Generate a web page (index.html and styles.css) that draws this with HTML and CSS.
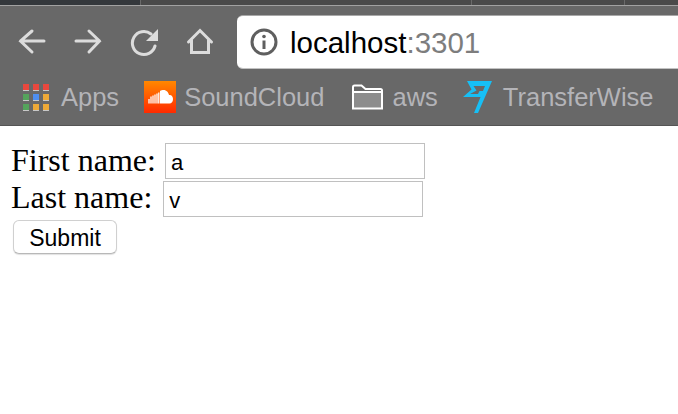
FILE: index.html
```html
<!DOCTYPE html>
<html lang="en">
<head>
<meta charset="utf-8">
<title>localhost:3301</title>
<link rel="stylesheet" href="styles.css">
</head>
<body>
<header class="chrome">
  <div class="tabstrip">
    <div class="tab active"></div>
    <div class="tab wide"></div>
    <div class="tab mid"></div>
    <div class="tab rest"></div>
  </div>
  <div class="toolbar">
    <nav class="nav">
      <svg class="nav-icon" viewBox="0 0 32 32"><path d="M29 16H5.500M17 6 5.500 16 17 27"/></svg>
      <svg class="nav-icon" viewBox="0 0 32 32"><path d="M5 16H28.500M18 6 28.500 16 18 27"/></svg>
      <svg class="nav-icon" viewBox="0 0 32 32"><path d="M28 21A11.500 11.500 0 1 1 24 9"/><path class="fill" d="M31 4V16H19Z"/></svg>
      <svg class="nav-icon" viewBox="0 0 32 32"><path d="M5.500 17 17 5.500 28.500 17M8.500 15V27.500H25.500V15"/></svg>
    </nav>
    <div class="omnibox">
      <svg class="info" viewBox="0 0 28 28"><circle cx="14" cy="14" r="12"/><path d="M14 12.500V21"/><circle class="dot" cx="14" cy="8.500" r="1.800"/></svg>
      <span class="url">localhost<span class="port">:3301</span></span>
    </div>
  </div>
  <div class="bookmarks">
    <a class="bookmark apps">
      <span class="grid">
        <i class="red"></i><i class="red"></i><i class="red"></i>
        <i class="green"></i><i class="blue"></i><i class="yellow"></i>
        <i class="green"></i><i class="yellow"></i><i class="yellow"></i>
      </span>
      Apps
    </a>
    <a class="bookmark sc">
      <svg class="soundcloud" viewBox="0 0 32 32">
        <defs><linearGradient id="sc" x1="0" y1="0" x2="0" y2="1"><stop offset="0" stop-color="#ff8800"/><stop offset="1" stop-color="#ff2a00"/></linearGradient></defs>
        <rect width="32" height="32" fill="url(#sc)"/>
        <path class="bars" d="M5 22.500V18M7 22.500V15.500M9 22.500V14.500M11 22.500V13.500M13 22.500V12.500M14.800 22.500V11.500"/>
        <path class="cloud" d="M16 22.500V10C17 9.300 18.500 9 19.500 9 22.500 9 24.500 11.500 25 14 27.500 13.500 29 15.500 29 18 29 20.800 27.500 22.500 25.500 22.500Z"/>
      </svg>
      SoundCloud
    </a>
    <a class="bookmark folder">
      <svg class="folder-icon" viewBox="0 0 32 26"><path class="folder-fill" d="M1.500 8H30.500V24.500H1.500Z"/><path class="folder-line" d="M1.500 24.500V3Q1.500 1.500 3 1.500H10L14 5H29Q30.500 5 30.500 6.500V24.500ZM1.500 8H30.500"/></svg>
      aws
    </a>
    <a class="bookmark tw">
      <svg class="wise" viewBox="0 0 29 32"><path d="M4 0H29L15 32H11L22 5H10.500L13.500 9.500 7 13H15L16.500 10H20L17.500 16H0L8.500 8.500Z"/></svg>
      TransferWise
    </a>
  </div>
</header>
<main class="page">
  <form>
    <div class="line first"><span class="label">First name: </span><input class="field" type="text" value="a"></div>
    <div class="line last"><span class="label">Last name: </span><input class="field" type="text" value="v"></div>
    <button class="submit" type="button">Submit</button>
  </form>
</main>
</body>
</html>
```
FILE: styles.css
```css
* { box-sizing: border-box; }
html, body { margin: 0; padding: 0; height: 100%; background: #fff; overflow: hidden; }
body { font-family: "Liberation Serif", serif; color: #000; }

.chrome { height: 126px; background: #686868; border-bottom: 1px solid #555; display: flex; flex-direction: column; }
.tabstrip { height: 6px; flex: none; display: flex; background: #4a4a4a; border-bottom: 1px solid #a2a2a2; }
.tab { border-right: 1px solid #6a6a6a; }
.active { width: 141px; background: #34383c; }
.wide { width: 331px; }
.mid { width: 153px; }
.rest { flex: 1; border-right: 0; }

.toolbar { height: 54px; flex: none; margin-top: 9px; display: flex; align-items: flex-start; }
.nav { display: flex; gap: 24px; width: 237px; padding: 10px 0 0 15px; }
.nav-icon { width: 32px; height: 32px; flex: none; fill: none; stroke: #dcdcdc; stroke-width: 3; stroke-linecap: round; stroke-linejoin: miter; }
.nav-icon .fill { fill: #dcdcdc; stroke: none; }

.omnibox { flex: 1; height: 54px; background: #fff; border-radius: 6px 0 0 6px; border-top: 1px solid #a8a8a8; border-bottom: 1px solid #c2c2c2; display: flex; align-items: center; padding-left: 13px; gap: 12px; }
.info { width: 28px; height: 28px; fill: none; stroke: #5f5f5f; stroke-width: 3; }
.info .dot { fill: #5f5f5f; stroke: none; }
.url { font: 29.500px "Liberation Sans", Arial, sans-serif; color: #000; padding-top: 2px; }
.port { color: #7d7d7d; }

.bookmarks { display: flex; align-items: center; flex: 1; padding-left: 23px; font: 25.500px "Liberation Sans", Arial, sans-serif; color: #b4b4b8; }
.bookmark { display: flex; align-items: center; white-space: nowrap; }
.grid { display: grid; grid-template-columns: repeat(3, 6px); grid-auto-rows: 7px; gap: 3px 4px; width: 26px; margin-right: 12px; }
.grid i { display: block; border-bottom: 1px solid #c8c8c8; }
.red { background: #e8483e; }
.green { background: #55a35c; }
.blue { background: #4e8ff0; }
.yellow { background: #eeaa38; }

.sc { margin-left: 25px; }
.soundcloud { width: 32px; height: 32px; margin-right: 8px; }
.bars { stroke: #fff; stroke-width: 1.300; fill: none; }
.cloud { fill: #fff; }

.folder { margin-left: 26px; }
.folder-icon { width: 33px; height: 26px; margin-right: 9px; }
.folder-fill { fill: #8d8d8d; }
.folder-line { fill: none; stroke: #fff; stroke-width: 2; }

.tw { margin-left: 25px; }
.wise { width: 29px; height: 32px; margin-right: 11px; fill: #17bff5; }

.page { padding: 16px 0 0 11px; font-size: 32px; line-height: 38px; }
.line { height: 38px; display: flex; align-items: center; white-space: pre; }
.first .label { margin-bottom: 2px; }
.last .label { margin-bottom: 4px; }
.field { width: 260px; height: 36px; padding: 3px 5px 0; border: 1px solid #c0c0c0; background: #fff; font: 22px "Liberation Sans", Arial, sans-serif; color: #000; outline: none; }
.first .field { margin-left: 1px; }
.last .field { margin-left: 3px; }
.submit { display: block; width: 104px; height: 34px; margin: 2px 0 0 2px; padding: 3px 0 0; border: 1px solid #d0d0d0; border-bottom-color: #b8b8b8; border-radius: 6px; background: #fff; box-shadow: 0 1px 1px rgba(0,0,0,.12); font: 23px "Liberation Sans", Arial, sans-serif; color: #000; }
```
